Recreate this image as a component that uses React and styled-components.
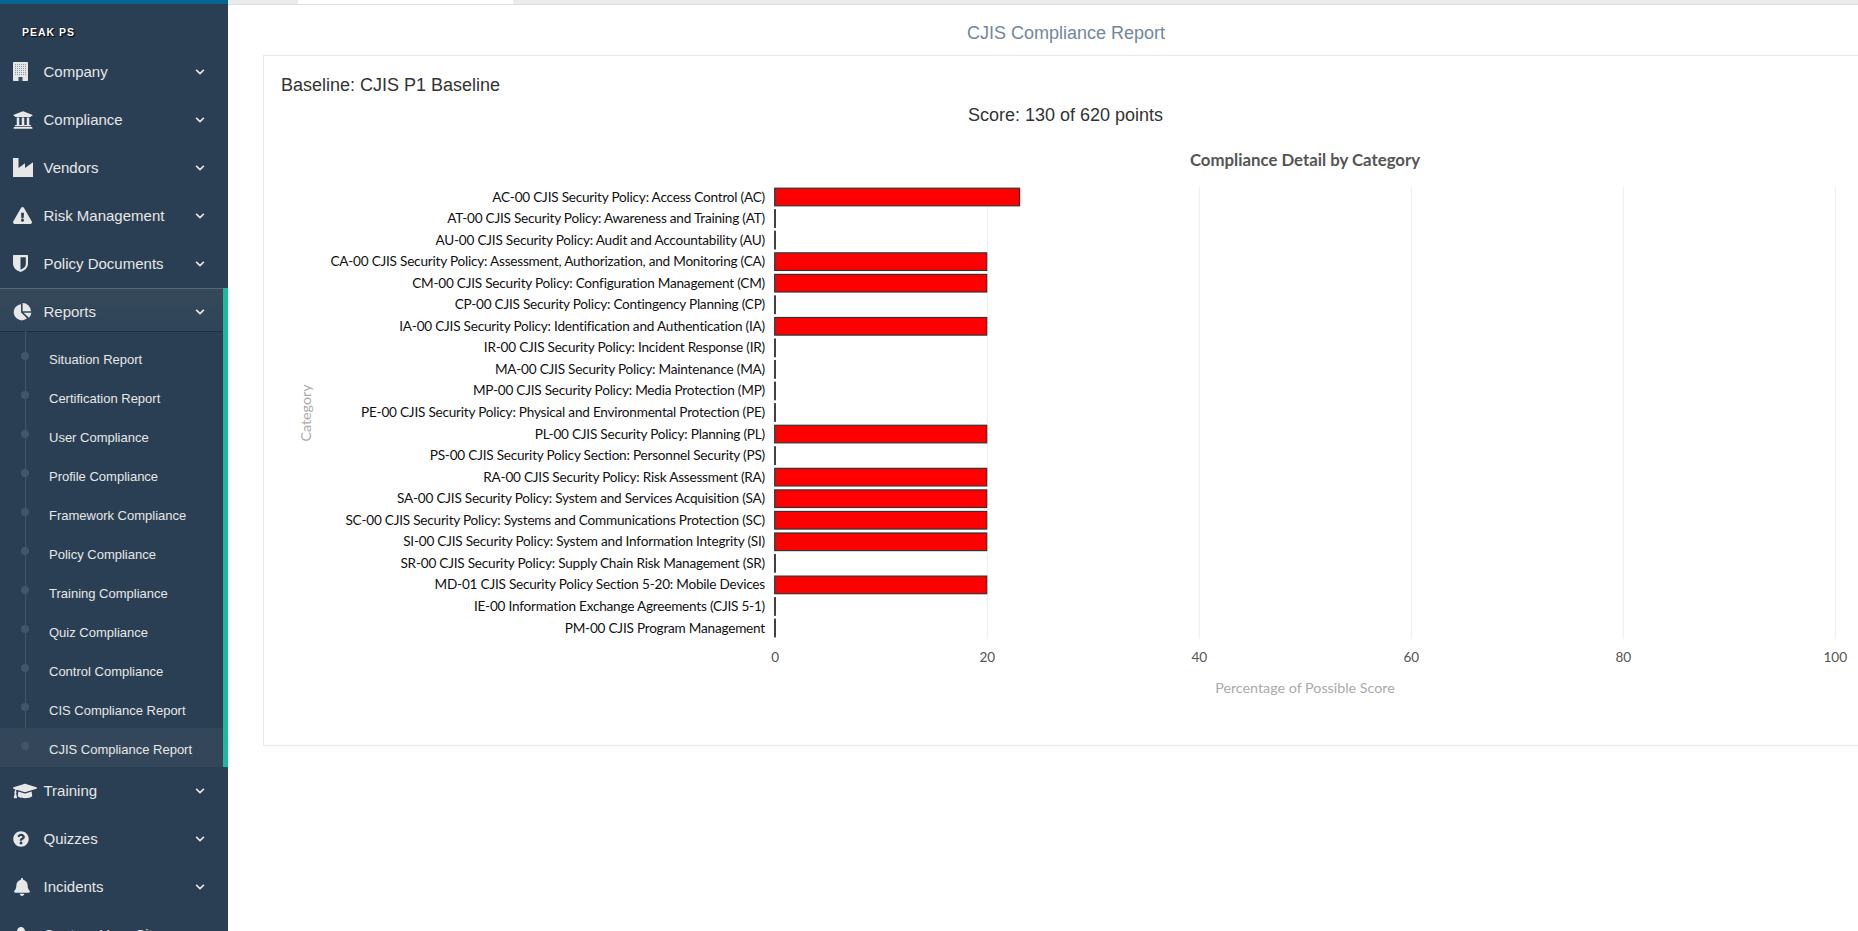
import React from 'react';
import styled, { createGlobalStyle } from 'styled-components';
import {
    FaUniversity,
    FaExclamationTriangle,
    FaGraduationCap,
    FaQuestionCircle,
    FaBell,
    FaUser,
    FaChevronDown,
} from 'react-icons/fa';

const GlobalStyle = createGlobalStyle`
    html, body {
        margin: 0;
        height: 100%;
        overflow: hidden;
        background: #fff;
        font-family: 'Liberation Sans', Arial, sans-serif;
    }
`;

const Page = styled.div`
    display: flex;
    width: 1858px;
    height: 931px;
    overflow: hidden;
`;
const Sidebar = styled.aside`
    flex: 0 0 228px;
    height: 931px;
    overflow: hidden;
    background: #2a3f54;
    color: #e7e7e7;
`;
const TopStrip = styled.div`
    height: 4px;
    background: #04668f;
`;
const Brand = styled.div`
    height: 44px;
    box-sizing: border-box;
    padding: 21px 0 0 22px;
    font-size: 10.5px;
    line-height: 14px;
    font-weight: 700;
    letter-spacing: 1px;
    color: #fff;
    text-shadow: 0 0 1px #000, 1px 1px 1px #000;
`;
const NavGroup = styled.div`
    border-right: ${(props) => (props.$active ? '5px solid #1abb9c' : '0')};
`;
const NavRow = styled.div`
    display: flex;
    align-items: center;
    box-sizing: border-box;
    height: ${(props) => (props.$active ? '43px' : '48px')};
    padding: ${(props) => (props.$active ? '4px 18px 0 12.5px' : '0 23px 1px 12.5px')};
    font-size: 15px;
    ${(props) =>
        props.$active &&
        `
        background: linear-gradient(#36495b, #2f4459);
        box-shadow: rgba(0, 0, 0, 0.25) 0 1px 0, inset rgba(255, 255, 255, 0.16) 0 1px 0;
        text-shadow: rgba(0, 0, 0, 0.25) 0 -1px 0;
    `}
`;
const IconSlot = styled.span`
    flex: 0 0 31px;
    display: flex;
    align-items: center;
    color: #e7e7e7;
`;
const NavLabel = styled.span`
    flex: 1;
`;
const SubMenu = styled.ul`
    position: relative;
    list-style: none;
    margin: 0;
    padding: 7px 0 0;
    &::before {
        content: '';
        position: absolute;
        left: 25px;
        top: 0;
        bottom: 0;
        border-left: 1px solid #425668;
    }
`;
const SubItem = styled.li`
    position: relative;
    box-sizing: border-box;
    height: 39px;
    padding: 13px 0 0 49px;
    font-size: 13px;
    line-height: 18px;
    background: ${(props) => (props.$current ? '#34475a' : 'transparent')};
    &::before {
        content: '';
        position: absolute;
        left: 21px;
        top: 14px;
        width: 8px;
        height: 8px;
        border-radius: 50%;
        background: #425668;
    }
`;

const Main = styled.main`
    flex: 0 0 1680px;
`;
const TabStrip = styled.div`
    height: 4px;
    padding-left: 70px;
    background: #ebebeb;
    border-bottom: 1px solid #d9dee4;
`;
const ActiveTab = styled.div`
    width: 215px;
    height: 4px;
    background: #fff;
`;
const PageTitle = styled.h2`
    margin: 0;
    height: 50px;
    padding-right: 4px;
    font-size: 18px;
    font-weight: 400;
    line-height: 57px;
    text-align: center;
    color: #73879c;
`;
const Card = styled.section`
    box-sizing: border-box;
    height: 691px;
    margin: 0 36px 0 35px;
    border: 1px solid #e6e9ed;
    background: #fff;
`;
const Baseline = styled.div`
    padding: 19px 0 0 17px;
    font-size: 18px;
    line-height: 21px;
    color: #333;
`;
const Score = styled.div`
    padding-top: 9px;
    padding-right: 4px;
    font-size: 18px;
    line-height: 21px;
    text-align: center;
    color: #333;
`;
const ChartFrame = styled.svg`
    display: block;
    width: 1606px;
    height: 590px;
    margin-top: 16px;
    font-family: 'Lato', 'Noto Sans', sans-serif;
`;
const AxisLabel = styled.text`
    font-size: 13.6px;
    fill: #111;
    text-anchor: end;
    letter-spacing: -0.22px;
`;
const TickLabel = styled.text`
    font-size: 13.6px;
    fill: #555;
    text-anchor: middle;
`;
const AxisTitle = styled.text`
    font-size: 14.3px;
    fill: #aaa;
    text-anchor: middle;
`;
const ChartTitle = styled.text`
    font-size: 16.8px;
    font-weight: 700;
    fill: #555;
    text-anchor: middle;
`;

// drawn by hand, the old font icons are not in the packages
const BuildingIcon = () => (
    <svg width="15" height="19" viewBox="0 0 15 19">
        <defs>
            <pattern id="windows" width="2" height="2" patternUnits="userSpaceOnUse">
                <rect width="1" height="1" fill="#8c98a4" />
            </pattern>
        </defs>
        <rect width="15" height="19" rx="0.8" fill="#e7e7e7" />
        <rect x="2" y="2" width="11" height="11" fill="url(#windows)" />
        <rect x="5.5" y="15" width="4" height="4" fill="#3a4f63" />
    </svg>
);
const FactoryIcon = () => (
    <svg width="20" height="19" viewBox="0 0 20 19">
        <path d="M0 0h5.5v10l6.5-4.8v4.8l8-5.8V19H0z" fill="#e7e7e7" />
    </svg>
);
const ShieldIcon = () => (
    <svg width="15" height="17" viewBox="0 0 15 17">
        <path
            fill="#e7e7e7"
            fillRule="evenodd"
            d="M0.6 0H14.4Q15 0 15 .6V9Q15 14 7.5 17 0 14 0 9V.6Q0 0 .6 0ZM7.5 2.2V14.8Q12.8 12.4 12.8 9V2.2Z"
        />
    </svg>
);
const PieIcon = () => (
    <svg width="19" height="18" viewBox="0 0 19 18">
        <path fill="#e7e7e7" d="M8 1.2V9.6l6 5.6A8 8 0 1 1 8 1.2Z" />
        <path fill="#e7e7e7" d="M9.6 0A8.4 8.4 0 0 1 18 8.2H9.6Z" />
        <path fill="#e7e7e7" d="M10.6 9.8H18.4A8.4 8.4 0 0 1 16 14.8Z" />
    </svg>
);

const navTop = [
    { name: 'Company', icon: <BuildingIcon /> },
    { name: 'Compliance', icon: <FaUniversity size={20} /> },
    { name: 'Vendors', icon: <FactoryIcon /> },
    { name: 'Risk Management', icon: <FaExclamationTriangle size={19} /> },
    { name: 'Policy Documents', icon: <ShieldIcon /> },
];
const navBottom = [
    { name: 'Training', icon: <FaGraduationCap size={24} /> },
    { name: 'Quizzes', icon: <FaQuestionCircle size={16} /> },
    { name: 'Incidents', icon: <FaBell size={18} /> },
    { name: 'Custom User Sites', icon: <FaUser size={16} /> },
];
const reports = [
    'Situation Report',
    'Certification Report',
    'User Compliance',
    'Profile Compliance',
    'Framework Compliance',
    'Policy Compliance',
    'Training Compliance',
    'Quiz Compliance',
    'Control Compliance',
    'CIS Compliance Report',
    'CJIS Compliance Report',
];

const categories = [
    ['AC-00 CJIS Security Policy: Access Control (AC)', 23.1],
    ['AT-00 CJIS Security Policy: Awareness and Training (AT)', 0],
    ['AU-00 CJIS Security Policy: Audit and Accountability (AU)', 0],
    ['CA-00 CJIS Security Policy: Assessment, Authorization, and Monitoring (CA)', 20],
    ['CM-00 CJIS Security Policy: Configuration Management (CM)', 20],
    ['CP-00 CJIS Security Policy: Contingency Planning (CP)', 0],
    ['IA-00 CJIS Security Policy: Identification and Authentication (IA)', 20],
    ['IR-00 CJIS Security Policy: Incident Response (IR)', 0],
    ['MA-00 CJIS Security Policy: Maintenance (MA)', 0],
    ['MP-00 CJIS Security Policy: Media Protection (MP)', 0],
    ['PE-00 CJIS Security Policy: Physical and Environmental Protection (PE)', 0],
    ['PL-00 CJIS Security Policy: Planning (PL)', 20],
    ['PS-00 CJIS Security Policy Section: Personnel Security (PS)', 0],
    ['RA-00 CJIS Security Policy: Risk Assessment (RA)', 20],
    ['SA-00 CJIS Security Policy: System and Services Acquisition (SA)', 20],
    ['SC-00 CJIS Security Policy: Systems and Communications Protection (SC)', 20],
    ['SI-00 CJIS Security Policy: System and Information Integrity (SI)', 20],
    ['SR-00 CJIS Security Policy: Supply Chain Risk Management (SR)', 0],
    ['MD-01 CJIS Security Policy Section 5-20: Mobile Devices', 20],
    ['IE-00 Information Exchange Agreements (CJIS 5-1)', 0],
    ['PM-00 CJIS Program Management', 0],
];

const X0 = 511.3;
const PX_PER_PCT = 10.6;
const ROW_TOP = 55;
const ROW_PITCH = 21.55;
const xOf = (pct) => X0 + pct * PX_PER_PCT;

function ComplianceChart() {
    return (
        <ChartFrame viewBox="0 0 1606 590">
            <ChartTitle x="1041" y="24">
                Compliance Detail by Category
            </ChartTitle>
            {[20, 40, 60, 80, 100].map((t) => (
                <line key={t} x1={xOf(t)} x2={xOf(t)} y1="45" y2="497" stroke="#eee" />
            ))}
            {categories.map(([label, pct], i) => {
                const cy = ROW_TOP + i * ROW_PITCH;
                return (
                    <g key={label}>
                        <AxisLabel x="501" y={cy + 4.5}>
                            {label}
                        </AxisLabel>
                        <rect
                            x={X0 - 0.6}
                            y={cy - 8.8}
                            width={Math.max(pct * PX_PER_PCT, 0.6)}
                            height="17.6"
                            fill="#f00"
                            stroke="#333"
                            strokeWidth="1.2"
                        />
                    </g>
                );
            })}
            {[0, 20, 40, 60, 80, 100].map((t) => (
                <TickLabel key={t} x={xOf(t)} y="520">
                    {t}
                </TickLabel>
            ))}
            <AxisTitle x="1041" y="551">
                Percentage of Possible Score
            </AxisTitle>
            <AxisTitle transform="translate(47 271) rotate(-90)">Category</AxisTitle>
        </ChartFrame>
    );
}

function App() {
    return (
        <Page>
            <GlobalStyle />
            <Sidebar>
                <TopStrip />
                <Brand>PEAK PS</Brand>
                {navTop.map((item) => (
                    <NavRow key={item.name}>
                        <IconSlot>{item.icon}</IconSlot>
                        <NavLabel>{item.name}</NavLabel>
                        <FaChevronDown size={10} />
                    </NavRow>
                ))}
                <NavGroup $active>
                    <NavRow $active>
                        <IconSlot>
                            <PieIcon />
                        </IconSlot>
                        <NavLabel>Reports</NavLabel>
                        <FaChevronDown size={10} />
                    </NavRow>
                    <SubMenu>
                        {reports.map((name) => (
                            <SubItem key={name} $current={name === 'CJIS Compliance Report'}>
                                {name}
                            </SubItem>
                        ))}
                    </SubMenu>
                </NavGroup>
                {navBottom.map((item) => (
                    <NavRow key={item.name}>
                        <IconSlot>{item.icon}</IconSlot>
                        <NavLabel>{item.name}</NavLabel>
                        <FaChevronDown size={10} />
                    </NavRow>
                ))}
            </Sidebar>
            <Main>
                <TabStrip>
                    <ActiveTab />
                </TabStrip>
                <PageTitle>CJIS Compliance Report</PageTitle>
                <Card>
                    <Baseline>Baseline: CJIS P1 Baseline</Baseline>
                    <Score>Score: 130 of 620 points</Score>
                    <ComplianceChart />
                </Card>
            </Main>
        </Page>
    );
}

export default App;
